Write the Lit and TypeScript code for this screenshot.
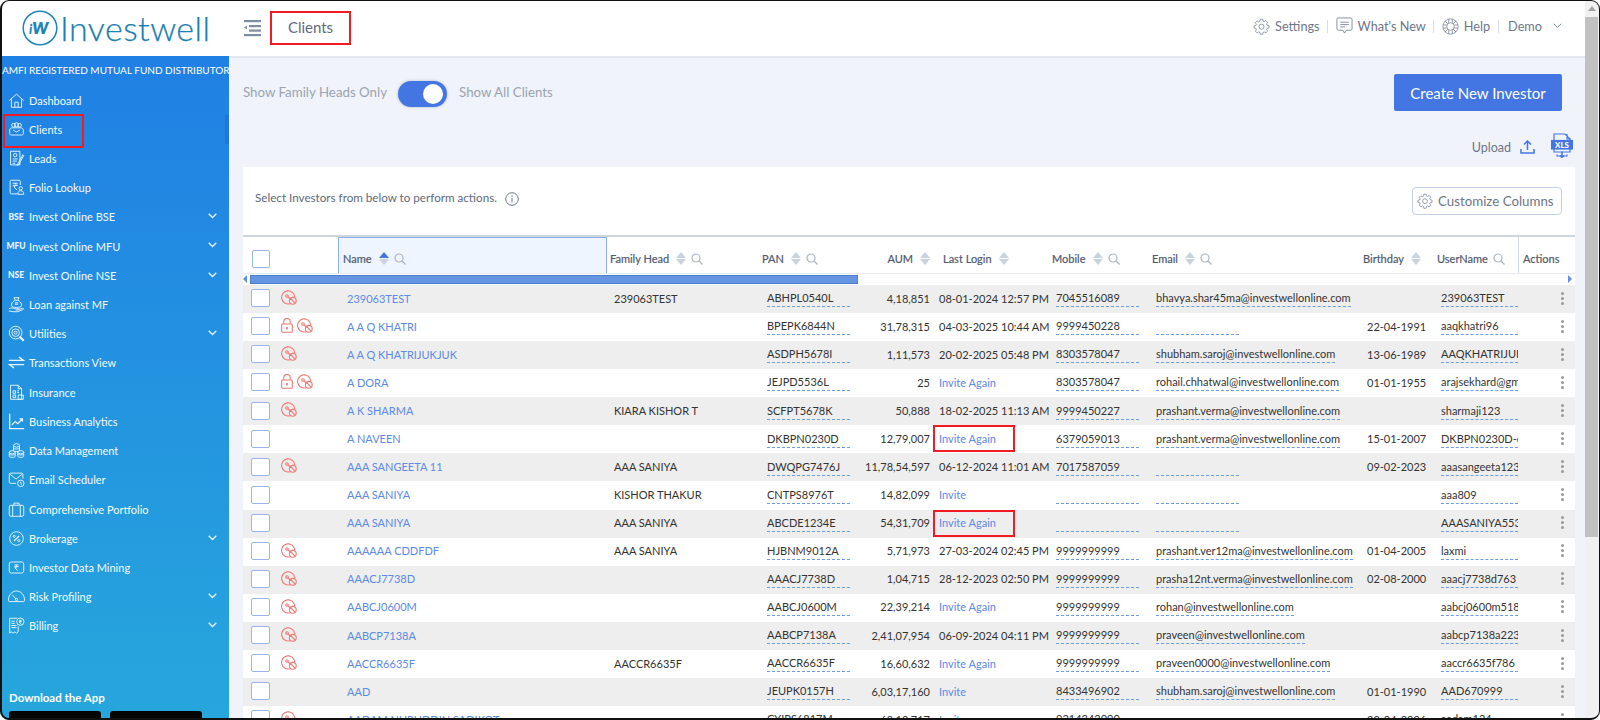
import { LitElement, html, css, svg } from "lit";
import { customElement } from "lit/decorators.js";

type Row = { name: string; fam: string; pan: string; aum: string; login: string; invite?: boolean; boxed?: boolean; mobile: string; email: string; bday: string; user: string; ic: number };
const D = "@investwellonline.com";
const rows: Row[] = [
  { name: "239063TEST", fam: "239063TEST", pan: "ABHPL0540L", aum: "4,18,851", login: "08-01-2024 12:57 PM", mobile: "7045516089", email: "bhavya.shar45ma" + D, bday: "", user: "239063TEST", ic: 1 },
  { name: "A A Q KHATRI", fam: "", pan: "BPEPK6844N", aum: "31,78,315", login: "04-03-2025 10:44 AM", mobile: "9999450228", email: "", bday: "22-04-1991", user: "aaqkhatri96", ic: 2 },
  { name: "A A Q KHATRIJUKJUK", fam: "", pan: "ASDPH5678I", aum: "1,11,573", login: "20-02-2025 05:48 PM", mobile: "8303578047", email: "shubham.saroj" + D, bday: "13-06-1989", user: "AAQKHATRIJUKJUK", ic: 1 },
  { name: "A DORA", fam: "", pan: "JEJPD5536L", aum: "25", login: "Invite Again", invite: true, mobile: "8303578047", email: "rohail.chhatwal" + D, bday: "01-01-1955", user: "arajsekhard@gmail.com", ic: 2 },
  { name: "A K SHARMA", fam: "KIARA KISHOR T", pan: "SCFPT5678K", aum: "50,888", login: "18-02-2025 11:13 AM", mobile: "9999450227", email: "prashant.verma" + D, bday: "", user: "sharmaji123", ic: 1 },
  { name: "A NAVEEN", fam: "", pan: "DKBPN0230D", aum: "12,79,007", login: "Invite Again", invite: true, boxed: true, mobile: "6379059013", email: "prashant.verma" + D, bday: "15-01-2007", user: "DKBPN0230D-e123", ic: 0 },
  { name: "AAA SANGEETA 11", fam: "AAA SANIYA", pan: "DWQPG7476J", aum: "11,78,54,597", login: "06-12-2024 11:01 AM", mobile: "7017587059", email: "", bday: "09-02-2023", user: "aaasangeeta123", ic: 1 },
  { name: "AAA SANIYA", fam: "KISHOR THAKUR", pan: "CNTPS8976T", aum: "14,82,099", login: "Invite", invite: true, mobile: "", email: "", bday: "", user: "aaa809", ic: 0 },
  { name: "AAA SANIYA", fam: "AAA SANIYA", pan: "ABCDE1234E", aum: "54,31,709", login: "Invite Again", invite: true, boxed: true, mobile: "", email: "", bday: "", user: "AAASANIYA5532", ic: 0 },
  { name: "AAAAAA CDDFDF", fam: "AAA SANIYA", pan: "HJBNM9012A", aum: "5,71,973", login: "27-03-2024 02:45 PM", mobile: "9999999999", email: "prashant.ver12ma" + D, bday: "01-04-2005", user: "laxmi", ic: 1 },
  { name: "AAACJ7738D", fam: "", pan: "AAACJ7738D", aum: "1,04,715", login: "28-12-2023 02:50 PM", mobile: "9999999999", email: "prasha12nt.verma" + D, bday: "02-08-2000", user: "aaacj7738d763", ic: 1 },
  { name: "AABCJ0600M", fam: "", pan: "AABCJ0600M", aum: "22,39,214", login: "Invite Again", invite: true, mobile: "9999999999", email: "rohan" + D, bday: "", user: "aabcj0600m518", ic: 1 },
  { name: "AABCP7138A", fam: "", pan: "AABCP7138A", aum: "2,41,07,954", login: "06-09-2024 04:11 PM", mobile: "9999999999", email: "praveen" + D, bday: "", user: "aabcp7138a223", ic: 1 },
  { name: "AACCR6635F", fam: "AACCR6635F", pan: "AACCR6635F", aum: "16,60,632", login: "Invite Again", invite: true, mobile: "9999999999", email: "praveen0000" + D, bday: "", user: "aaccr6635f786", ic: 1 },
  { name: "AAD", fam: "", pan: "JEUPK0157H", aum: "6,03,17,160", login: "Invite", invite: true, mobile: "8433496902", email: "shubham.saroj" + D, bday: "01-01-1990", user: "AAD670999", ic: 0 },
  { name: "AADAM NURUDDIN SADIKOT", fam: "", pan: "CYIPS6817M", aum: "68,10,717", login: "Invite", invite: true, mobile: "9214343090", email: "", bday: "20-04-2006", user: "aadam124", ic: 1 },
];

const gear = svg`<path d="M8.6 1.5h2.8l.4 2.1 1.5.7 1.9-1.2 2 2-1.2 1.9.7 1.5 2.1.4v2.8l-2.1.4-.7 1.5 1.2 1.9-2 2-1.9-1.2-1.5.7-.4 2.1H8.6l-.4-2.1-1.5-.7-1.9 1.2-2-2 1.2-1.9-.7-1.5-2.1-.4V9.2l2.1-.4.7-1.5-1.2-1.9 2-2 1.9 1.2 1.5-.7z"/><circle cx="10" cy="10.2" r="3"/>`;
const sideIcons: Record<string, unknown> = {
  home: svg`<path d="M1.5 10 10 2.5l8.5 7.5M4 8.5V18h12V8.5M8 18v-6h4v6"/>`,
  clients: svg`<circle cx="6.5" cy="5" r="2.2"/><circle cx="10" cy="4.5" r="2.4"/><circle cx="13.5" cy="5" r="2.2"/><path d="M2 15V10.5c0-1.5 1.5-2.5 3-2.5h10c1.5 0 3 1 3 2.5V15c0 1-1 1.5-2 1.5H4c-1 0-2-.5-2-1.5z"/><path d="M6 10.5 10 13l4-2.5"/>`,
  leads: svg`<path d="M3 1.5h11v16H3z"/><circle cx="8.5" cy="6" r="2"/><path d="M5.5 10.5h6M5.5 13h5M5.5 15.5h3M17.5 5.5l-5.500 10-1.500 2.500 2.500-1.500 5.500-10z"/>`,
  folio: svg`<path d="M11 17.500H4c-1 0-1.500-.5-1.500-1.500V3c0-1 .5-1.500 1.500-1.500h9c1 0 1.500.5 1.500 1.500v4"/><path d="M5.500 5h6M5.500 7.500h6M8 5c2 0 2 3.500-1 4l3.500 4"/><circle cx="15" cy="11" r="2"/><path d="M11.500 18c0-3 1.500-4.200 3.500-4.200s3.500 1.200 3.500 4.200z"/>`,
  loan: svg`<path d="M7 2h6l-1.500 3h-3zM8 5c-3 2-4 4-4 6 0 2 3 2.500 6 2.500s6-.5 6-2.500c0-2-1-4-4-6"/><path d="M1 15c3-1.500 5-1 7 0h4c2 0 1 1.500 0 1.500H9M12 16l5-1.500c1.500 0 1.500 1 .5 1.500l-6 2.500H6l-5-1"/><path d="M8 8h4M8 9.700h4"/>`,
  util: svg`<circle cx="9" cy="9" r="7.500"/><circle cx="9" cy="9" r="4.500"/><circle cx="9" cy="9" r="1.800"/><path d="m13.500 13.500 5 5" stroke-width="2.600"/>`,
  trans: svg`<path d="M1 7.500h17L13 3.500M19 12.500H2l5 4" stroke-width="1.700"/>`,
  ins: svg`<path d="M3 1.500h9l4 4V18H3z"/><path d="M12 1.500v4h4M6 8h3v3H6zM11 8h2M11 10h2M6 13h3v3H6z"/><path d="M12 13h6v5h-6z"/>`,
  biz: svg`<path d="M2 1v17.500h17" stroke-width="1.500"/><path d="m4.500 14 4-4 3 2.500L17 7M13.500 7H17v3" stroke-width="1.500"/>`,
  data: svg`<ellipse cx="10" cy="4" rx="3.500" ry="2"/><path d="M6.500 4v6.500c0 1 7 1 7 0V4M6.500 7.500c0 1 7 1 7 0"/><ellipse cx="5" cy="12" rx="3.500" ry="1.800"/><path d="M1.500 12v5c0 1.500 7 1.500 7 0v-5M1.500 14.500c0 1 7 1 7 0"/><ellipse cx="15" cy="12" rx="3.500" ry="1.800"/><path d="M11.500 12v5c0 1.500 7 1.500 7 0v-5M11.500 14.500c0 1 7 1 7 0"/>`,
  mail: svg`<path d="M9.500 14.500H3c-1 0-1.500-.5-1.500-1.500V4c0-1 .5-1.500 1.500-1.500h13c1 0 1.500.5 1.500 1.500v5"/><path d="m2 3.500 7.500 6 7.500-6"/><circle cx="15" cy="14.500" r="3.800"/><path d="M15 12.500v2.200l1.500 1"/>`,
  port: svg`<rect x="1.500" y="5" width="17" height="13" rx="2"/><path d="M7 5V2.500h6V5M5.500 5v13M14.500 5v13"/>`,
  brok: svg`<circle cx="10" cy="10" r="8"/><path d="m7 13 6-6" stroke-width="1.500"/><circle cx="7.300" cy="7.500" r="1.200"/><circle cx="12.700" cy="12.500" r="1.200"/>`,
  mine: svg`<rect x="1.500" y="3.500" width="17" height="13" rx="2.500"/><path d="M7.500 7h5M7.500 9h5M9 7c2 0 2 3.500-1 3.500l3.500 3"/>`,
  risk: svg`<path d="M2 16h16c1 0 1.500-.5 1.500-1.500C19.500 8 15 3.500 10 3.500S.5 8 .5 14.500C.5 15.500 1 16 2 16z"/><path d="M5 8l4.500 5"/><circle cx="10" cy="13.500" r="1.300"/>`,
  bill: svg`<path d="M2 1.500h9M2 1.500V19l2-1.500 2 1.500 2-1.500 2 1.500 2-1.500V11"/><path d="M4 5h4M4 7.500h4M4 10h6M4 12.500h6"/><circle cx="14.500" cy="5.500" r="4.300"/><path d="M13 4h3M13 5.500h3M14 4c1.500 0 1.500 2.500-.5 2.500l2 2"/>`,
};
const side: { t: string; i?: string; tag?: string; chev?: boolean; active?: boolean }[] = [
  { t: "Dashboard", i: "home" }, { t: "Clients", i: "clients", active: true }, { t: "Leads", i: "leads" }, { t: "Folio Lookup", i: "folio" },
  { t: "Invest Online BSE", tag: "BSE", chev: true }, { t: "Invest Online MFU", tag: "MFU", chev: true }, { t: "Invest Online NSE", tag: "NSE", chev: true },
  { t: "Loan against MF", i: "loan" }, { t: "Utilities", i: "util", chev: true }, { t: "Transactions View", i: "trans" }, { t: "Insurance", i: "ins" },
  { t: "Business Analytics", i: "biz" }, { t: "Data Management", i: "data" }, { t: "Email Scheduler", i: "mail" }, { t: "Comprehensive Portfolio", i: "port" },
  { t: "Brokerage", i: "brok", chev: true }, { t: "Investor Data Mining", i: "mine" }, { t: "Risk Profiling", i: "risk", chev: true }, { t: "Billing", i: "bill", chev: true },
];

@customElement("app-root")
export class AppRoot extends LitElement {
  static styles = css`
    :host { display: block; width: 1600px; height: 720px; position: relative; overflow: hidden; background: #fff; font-family: Lato, "Liberation Sans", sans-serif; color: #333; }
    * { box-sizing: border-box; }
    .frame { position: absolute; inset: 0; border: 2px solid #111; border-top-width: 1.5px; border-right-width: 1px; border-radius: 9px; pointer-events: none; z-index: 9; box-shadow: 0 0 0 6px #fff; }
    .shell { display: grid; grid-template-columns: 1fr 15px; height: 720px; }
    .scroll { background: #f1f1f1; display: flex; flex-direction: column; align-items: stretch; padding-right: 2px; }
    .scroll .up { height: 17px; display: flex; justify-content: center; align-items: center; }
    .scroll .up i { border: 4px solid transparent; border-bottom: 5px solid #a3a3a3; border-top: 0; }
    .scroll .thumb { height: 520px; background: #c1c1c1; }
    .scroll .rest { flex: 1; display: flex; justify-content: center; align-items: flex-end; padding-bottom: 3px; }
    .scroll .rest i { border: 4px solid transparent; border-top: 5px solid #505050; border-bottom: 0; }
    .left { min-width: 0; display: flex; flex-direction: column; }
    header { height: 56px; display: flex; align-items: center; background: #fff; flex: none; }
    .logo { width: 238px; display: flex; align-items: center; padding-left: 22px; gap: 2px; flex: none; color: #1b80b2; }
    .logo svg { flex: none; }
    .logo b { font-weight: 300; font-size: 34px; letter-spacing: .45px; line-height: 1; -webkit-text-stroke: .25px #1b80b2; }
    .burger { flex: none; margin: 0 9px 0 5px; }
    .title { width: 81px; height: 34px; border: 2px solid #f01c22; display: flex; align-items: center; justify-content: center; font-size: 15px; color: #5f6b80; flex: none; padding-bottom: 2px; }
    .nav { margin-left: auto; display: flex; align-items: center; font-size: 12.7px; color: #6d7688; padding: 0 23px 4px 0; height: 100%; }
    .nav .it { display: flex; align-items: center; gap: 5px; }
    .nav .sep { width: 1px; height: 13px; background: #d8dde6; margin: 0 9px 0 8px; }
    .nav .sep.tight { margin: 0 8px 0 7px; }
    .nav svg { fill: none; stroke: #7f8a9c; stroke-width: 1; flex: none; }
    .nav .chev { margin-left: 11px; }
    .body { flex: 1; display: flex; min-height: 0; }
    aside { width: 229px; flex: none; background: linear-gradient(180deg, #2080e4 0%, #29b5d9 100%); color: #fff; display: flex; flex-direction: column; }
    .amfi { height: 29.4px; line-height: 29px; font-size: 10px; padding-left: 2px; white-space: nowrap; overflow: hidden; flex: none; }
    .si { height: 29.22px; flex: none; display: flex; align-items: center; font-size: 11px; position: relative; color: #f3faff; }
    .si.active { background: linear-gradient(90deg, transparent 225px, #1f78d8 225px); }
    .si .ic { width: 29px; flex: none; display: flex; justify-content: center; padding-left: 3px; }
    .si svg.g { fill: none; stroke: #e8f5ff; stroke-width: 1.1; }
    .si .tag { font-size: 8.5px; font-weight: 900; color: #e8f5ff; }
    .si .ch { position: absolute; left: 208px; top: 11px; }
    .mark { position: absolute; left: 3px; top: -1px; width: 81px; height: 34px; border: 2px solid #f01c22; }
    .dl { margin-top: 50px; padding-left: 9px; font-size: 11.5px; font-weight: 700; color: #fff; flex: none; }
    .stores { display: flex; gap: 9px; padding-left: 9px; margin-top: 7px; flex: none; }
    .stores i { width: 92px; height: 10px; background: #050505; border-radius: 3px 3px 0 0; }
    main { flex: 1; min-width: 0; background: #f0f3f9; border-top: 2px solid #e2e7f0; padding: 16px 10px 0 14px; overflow: hidden; }
    .top { display: flex; align-items: flex-start; height: 37px; }
    .lbl { font-size: 13.3px; color: #9aa3b2; line-height: 37px; }
    .toggle { width: 49px; height: 26px; border-radius: 13px; background: #4476e3; margin: 7px 12px 0 11px; padding: 3px 4px 3px 0; display: flex; justify-content: flex-end; box-shadow: 0 0 3px rgba(60,70,100,.35); }
    .toggle i { width: 20px; height: 20px; background: #fff; border-radius: 50%; }
    .btn { margin-left: auto; margin-right: 13px; width: 168px; height: 37px; background: #4476e3; color: #fff; font-size: 15px; border-radius: 2px; display: flex; align-items: center; justify-content: center; }
    .up-row { height: 56px; display: flex; align-items: flex-start; justify-content: flex-end; padding-top: 22px; }
    .up-row span { font-size: 12.5px; color: #6d7688; line-height: 30px; }
    .up-row .a { margin: 7px 0 0 9px; fill: none; stroke: #4476e3; stroke-width: 1.5; }
    .up-row .x { margin: 0 2px 0 16px; }
    .card { background: #fff; height: 800px; }
    .ctop { height: 68px; display: flex; align-items: flex-start; padding: 20px 13px 0 12px; }
    .ctop .s { font-size: 11.65px; color: #616a7c; line-height: 22px; }
    .ctop .inf { margin: 5px 0 0 8px; fill: none; stroke: #6d7688; }
    .cust { margin-left: auto; width: 150px; height: 28px; border: 1px solid #c3cfe5; border-radius: 4px; display: flex; align-items: center; font-size: 13.3px; color: #6d7688; padding-left: 4px; gap: 5px; }
    .cust svg { fill: none; stroke: #7f8a9c; stroke-width: 1; }
    .g { display: grid; grid-template-columns: 37px 58px 272px 152px 98px 74px 118px 100px 211px 74px 81px 57px; }
    .hd { height: 38px; border-top: 2px solid #cfd6e2; font-size: 11px; color: #4f5a6e; }
    .hd > div { display: flex; align-items: center; padding-top: 7px; gap: 5px; white-space: nowrap; -webkit-text-stroke: .2px #4f5a6e; }
    .hd .nm { background: #eef5fe; border: 1px solid #8ab0ee; border-bottom: 0; padding-left: 4px; padding-top: 6px; margin-right: 3px; }
    .hd .aumh { justify-content: flex-end; padding-right: 4px; }
    .hd .ll { padding-left: 9px; }
    .hd .act { border-left: 1px solid #d6dbe4; padding-left: 4px; }
    .sort { display: flex; flex-direction: column; gap: 1px; flex: none; margin-left: 2px; }
    .sort i { border: 5px solid transparent; border-top: 0; border-bottom: 6px solid #c9d2df; display: block; }
    .sort i + i { border-bottom: 0; border-top: 6px solid #c9d2df; }
    .sort.on i:first-child { border-bottom-color: #4476e3; }
    .q { fill: none; stroke: #aab4c3; stroke-width: 1.2; flex: none; }
    .strip { height: 12px; display: flex; align-items: center; position: relative; padding-left: 7px; background: #fff; box-shadow: inset 0 1px 1px rgba(120,130,150,.18); }
    .strip .bar { width: 608px; height: 9px; background: #6594e0; border: 1px solid #4f80d0; }
    .strip .l { position: absolute; left: 0; top: 2px; border: 4px solid transparent; border-left: 0; border-right: 4px solid #5f8fe0; }
    .strip .r { position: absolute; right: 3px; top: 2px; border: 4px solid transparent; border-right: 0; border-left: 4px solid #5f8fe0; }
    .r0 { height: 28.07px; font-size: 11px; background: #fff; align-items: center; white-space: nowrap; }
    .r0.z { background: #eeeeee; }
    .r0 > div { min-width: 0; height: 100%; display: flex; align-items: center; padding-bottom: 1.500px; }
    .box { width: 19px; height: 18px; border: 1.5px solid #9ab5ec; border-radius: 2px; background: #fff; margin-left: 8px; }
    .hd .box { width: 18px; margin-left: 9px; }
    .r0 > .ics { gap: 4px; padding-left: 1px; padding-bottom: 3px; }
    .ics svg { fill: none; stroke: #ef7a76; stroke-width: 1.1; flex: none; }
    .link { color: #5b8ae8; }
    .pad { padding-left: 4px; }
    .pan5 { padding-left: 5px; }
    .nmc { padding-left: 9px; }
    .u { display: block; border-bottom: 1px dashed #6c9be8; height: 17px; line-height: 15px; overflow: hidden; min-width: 83px; margin-top: 1px; }
    .u.pan { width: 83px; }
    .u.usr { width: 77px; min-width: 75px; }
    .aum { justify-content: flex-end; padding-right: 4px; }
    .log { position: relative; padding-left: 5px; }
    .log .red { position: absolute; left: -1px; top: 0; width: 82px; height: 27px; border: 2px solid #f01c22; }
    .dots { display: flex; flex-direction: column; gap: 2px; padding-left: 43px; justify-content: center; align-items: flex-start !important; }
    .dots i { width: 3px; height: 3px; border-radius: 50%; background: #9a9a9a; }
    .cl { overflow: hidden; }
  `;

  private sortIc(on = false) {
    return html`<span class="sort ${on ? "on" : ""}"><i></i><i></i></span>`;
  }
  private q() {
    return html`<svg class="q" width="12" height="12" viewBox="0 0 12 12"><circle cx="5" cy="5" r="4"/><path d="m8 8 3.500 3.500"/></svg>`;
  }
  private disc() {
    return html`<svg width="16" height="15" viewBox="0 0 16 15"><path d="M9 13.800A6.600 6.600 0 1 1 13.800 7"/><circle cx="6" cy="6" r="1.300"/><path d="M7 7l3 2.500"/><circle cx="11.800" cy="10.800" r="3.400"/><path d="m9.500 8.500 4.600 4.600"/></svg>`;
  }
  private lock() {
    return html`<svg width="12" height="15" viewBox="0 0 12 15"><rect x=".7" y="6" width="10.600" height="8.300" rx=".8"/><path d="M2.800 6V3.600a3.200 3.200 0 0 1 6.400 0V6"/><path d="M6 9v2.500" stroke-width="1.600"/></svg>`;
  }
  private chev(color: string, w = 9) {
    return html`<svg class="ch chev" width="${w}" height="6" viewBox="0 0 9 6" fill="none" stroke="${color}" stroke-width="1.300" style="stroke:${color}"><path d="m.7.7 3.800 3.800L8.300.7"/></svg>`;
  }

  render() {
    return html`
      <div class="shell">
        <div class="left">
          <header>
            <div class="logo">
              <svg width="36" height="36" viewBox="0 0 36 36"><circle cx="18" cy="18" r="16.800" fill="none" stroke="#1c86b8" stroke-width="1.500"/><text x="7" y="24" font-family="Lato" font-style="italic" font-weight="900" fill="#1c86b8"><tspan font-size="13">i</tspan><tspan font-size="22">w</tspan></text></svg>
              <b>Investwell</b>
            </div>
            <svg class="burger" width="18" height="18" viewBox="0 0 18 18" fill="#7f8da6"><rect x="1" y="1" width="17" height="2.200"/><rect x="6" y="6" width="12" height="2.200"/><rect x="6" y="10.500" width="12" height="2.200"/><rect x="1" y="15" width="17" height="2.200"/><path d="M1 8.500 4 6.500v4z"/></svg>
            <div class="title">Clients</div>
            <div class="nav">
              <div class="it"><svg width="17" height="17" viewBox="0 0 20 20">${gear}</svg>Settings</div><i class="sep tight"></i>
              <div class="it"><svg width="17" height="18" viewBox="0 0 18 19"><path d="M2.500 1h13c1 0 1.500.5 1.500 1.500v10c0 1-.5 1.500-1.500 1.500H11l-2 3-1.500-3h-5C1.500 14 1 13.500 1 12.500v-10C1 1.500 1.500 1 2.500 1z"/><path d="M4.500 5.500h9M4.500 8h9M4.500 10.500h5"/></svg>What's New</div><i class="sep tight"></i>
              <div class="it"><svg width="17" height="17" viewBox="0 0 20 20"><circle cx="10" cy="10" r="9"/><circle cx="10" cy="10" r="4.500"/><path d="m3.500 3.500 3.300 3.300M16.500 3.500l-3.300 3.300M3.500 16.500l3.300-3.300M16.500 16.500l-3.300-3.300M8 1.500l-.3 4M12 1.500l.3 4M8 18.500l-.3-4M12 18.500l.3-4M1.500 8l4 .3M1.500 12l4-.3M18.500 8l-4 .3M18.500 12l-4-.3"/></svg>Help</div><i class="sep"></i>
              <div class="it">Demo</div>
              ${this.chev("#7f8a9c")}
            </div>
          </header>
          <div class="body">
            <aside>
              <div class="amfi">AMFI REGISTERED MUTUAL FUND DISTRIBUTOR</div>
              ${side.map((s) => html`
                <div class="si ${s.active ? "active" : ""}">
                  <span class="ic">${s.tag ? html`<span class="tag">${s.tag}</span>` : html`<svg class="g" width="17" height="17" viewBox="0 0 20 20">${sideIcons[s.i!]}</svg>`}</span>
                  ${s.t}
                  ${s.chev ? this.chev("#e8f5ff") : ""}
                  ${s.active ? html`<span class="mark"></span>` : ""}
                </div>`)}
              <div class="dl">Download the App</div>
              <div class="stores"><i></i><i></i></div>
            </aside>
            <main>
              <div class="top">
                <span class="lbl">Show Family Heads Only</span>
                <div class="toggle"><i></i></div>
                <span class="lbl">Show All Clients</span>
                <div class="btn">Create New Investor</div>
              </div>
              <div class="up-row">
                <span>Upload</span>
                <svg class="a" width="15" height="14" viewBox="0 0 15 14"><path d="M7.500 10V1.500M4 4.500l3.500-3.500L11 4.500M1 9v4h13V9"/></svg>
                <svg class="x" width="22" height="25" viewBox="0 0 22 25" fill="none" stroke="#4476e3" stroke-width="1.200"><path d="M3 7V1h11l5 5v3M3 16v3h16v-3M16 1v5h4M6 21.500 6 23h10v-1.500"/><rect x="0.500" y="7.500" width="21" height="8.500" fill="#4476e3"/><text x="11" y="14.500" text-anchor="middle" font-family="Lato" font-weight="900" font-size="8" fill="#fff" stroke="none">XLS</text><path d="M11 18.500V24M9 22.500l2 2 2-2" stroke-width="1.500"/></svg>
              </div>
              <div class="card">
                <div class="ctop">
                  <span class="s">Select Investors from below to perform actions.</span>
                  <svg class="inf" width="14" height="14" viewBox="0 0 14 14"><circle cx="7" cy="7" r="6.300"/><path d="M7 6v4.500M7 3.500v1.200"/></svg>
                  <div class="cust"><svg width="16" height="16" viewBox="0 0 20 20">${gear}</svg>Customize Columns</div>
                </div>
                <div class="g hd">
                  <div><span class="box"></span></div>
                  <div></div>
                  <div class="nm">Name ${this.sortIc(true)} ${this.q()}</div>
                  <div>Family Head ${this.sortIc()} ${this.q()}</div>
                  <div>PAN ${this.sortIc()} ${this.q()}</div>
                  <div class="aumh">AUM ${this.sortIc()}</div>
                  <div class="ll">Last Login ${this.sortIc()}</div>
                  <div>Mobile ${this.sortIc()} ${this.q()}</div>
                  <div>Email ${this.sortIc()} ${this.q()}</div>
                  <div>Birthday ${this.sortIc()}</div>
                  <div>UserName ${this.q()}</div>
                  <div class="act">Actions</div>
                </div>
                <div class="strip"><i class="l"></i><div class="bar"></div><i class="r"></i></div>
                ${rows.map((r, i) => html`
                  <div class="g r0 ${i % 2 === 0 ? "z" : ""}">
                    <div><span class="box"></span></div>
                    <div class="ics">${r.ic === 2 ? this.lock() : ""}${r.ic ? this.disc() : ""}</div>
                    <div class="nmc link">${r.name}</div>
                    <div class="pad">${r.fam}</div>
                    <div class="cl pan5"><span class="u pan">${r.pan}</span></div>
                    <div class="aum">${r.aum}</div>
                    <div class="log ${r.invite ? "link" : ""}">${r.login}${r.boxed ? html`<span class="red"></span>` : ""}</div>
                    <div class="pad"><span class="u pan">${r.mobile}</span></div>
                    <div class="pad"><span class="u">${r.email}</span></div>
                    <div class="pad">${r.bday}</div>
                    <div class="pad cl"><span class="u usr">${r.user}</span></div>
                    <div class="dots"><i></i><i></i><i></i></div>
                  </div>`)}
              </div>
            </main>
          </div>
        </div>
        <div class="scroll"><div class="up"><i></i></div><div class="thumb"></div><div class="rest"><i></i></div></div>
      </div>
      <div class="frame"></div>
    `;
  }
}
